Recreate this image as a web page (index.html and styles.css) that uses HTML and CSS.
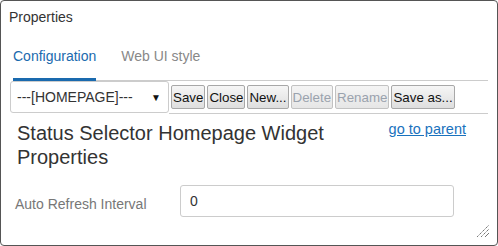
FILE: index.html
```html
<!DOCTYPE html>
<html lang="en">
<head>
    <meta charset="UTF-8">
    <title>Properties</title>
    <link rel="stylesheet" href="styles.css">
</head>
<body>
    <div class="window">
        <div class="title">Properties</div>

        <div class="tabs">
            <div class="tab active">Configuration</div>
            <div class="tab">Web UI style</div>
        </div>

        <div class="toolbar">
            <div class="picker">
                <span>---[HOMEPAGE]---</span>
                <span class="arrow">&#9660;</span>
            </div>
            <div class="buttons">
                <button>Save</button>
                <button>Close</button>
                <button>New...</button>
                <button disabled>Delete</button>
                <button disabled>Rename</button>
                <button>Save as...</button>
            </div>
        </div>

        <div class="head">
            <h1>Status Selector Homepage Widget Properties</h1>
            <a href="#" class="parent">go to parent</a>
        </div>

        <div class="field">
            <label for="refresh">Auto Refresh Interval</label>
            <input type="text" id="refresh" value="0">
        </div>

        <svg class="grip" width="14" height="14" viewBox="0 0 14 14">
            <line x1="1" y1="13" x2="13" y2="1" stroke="#777" stroke-width="1" stroke-dasharray="1.5 0.6"/>
            <line x1="5" y1="13" x2="13" y2="5" stroke="#777" stroke-width="1" stroke-dasharray="1.5 0.6"/>
            <line x1="9" y1="13" x2="13" y2="9" stroke="#777" stroke-width="1"/>
        </svg>
    </div>
</body>
</html>
```

FILE: styles.css
```css
body {
    margin: 0;
    font-family: "Liberation Sans", Arial, sans-serif;
    background: #fff;
}
.window {
    position: relative;
    box-sizing: border-box;
    width: 498px;
    height: 246px;
    border: 1px solid #555;
    border-radius: 4px;
    background: #fff;
}
.title {
    margin: 8px 0 0 8px;
    font-size: 14px;
    line-height: 16px;
    color: #333;
}
.tabs {
    display: flex;
    gap: 25px;
    margin: 23px 9px 0 12px;
    border-bottom: 1px solid #ccc;
}
.tab {
    font-size: 14px;
    line-height: 16px;
    padding-bottom: 14px;
    border-bottom: 3px solid transparent;
    margin-bottom: -1px;
    color: #888;
}
.tab.active {
    color: #1a6aae;
    border-bottom-color: #1a6aae;
}
.toolbar {
    display: flex;
    align-items: flex-start;
    margin: 0 9px 0 9px;
}
.picker {
    box-sizing: border-box;
    width: 159px;
    height: 32px;
    display: flex;
    align-items: center;
    justify-content: space-between;
    padding: 0 7px 0 6px;
    border: 1px solid #ccc;
    border-radius: 3px;
    font-size: 14px;
    color: #333;
}
.arrow {
    font-size: 10px;
    color: #111;
}
.buttons {
    flex: 1;
    box-sizing: border-box;
    height: 33px;
    display: flex;
    gap: 2px;
    align-items: flex-start;
    padding: 4px 0 0 2px;
    border-bottom: 1px solid #ccc;
}
button {
    font-family: "Liberation Sans", Arial, sans-serif;
    font-size: 13.33px;
    height: 24px;
    padding: 0 1px;
    border: 1px solid #a8a8a8;
    border-radius: 2px;
    background: linear-gradient(#f6f6f6, #dedede);
    color: #111;
}
button:disabled {
    color: #9aa2ad;
    border-color: #c2c2c2;
    background: linear-gradient(#f4f4f4, #e6e6e6);
}
.head {
    display: flex;
    align-items: flex-start;
    margin-top: 7px;
    padding: 0 31px 0 16px;
}
h1 {
    flex: 1;
    margin: 0;
    font-size: 20px;
    line-height: 24px;
    font-weight: normal;
    color: #333;
}
.parent {
    font-size: 14.5px;
    line-height: 17px;
    color: #1a72bd;
}
.field {
    display: flex;
    align-items: flex-start;
    margin-top: 16px;
    padding-left: 14px;
}
label {
    width: 165px;
    margin-top: 11px;
    font-size: 14px;
    line-height: 16px;
    color: #777;
}
input {
    box-sizing: border-box;
    width: 274px;
    height: 32px;
    padding: 0 9px;
    border: 1px solid #ccc;
    border-radius: 3px;
    font-family: "Liberation Sans", Arial, sans-serif;
    font-size: 14px;
    color: #333;
}
.grip {
    position: absolute;
    right: 7px;
    bottom: 7px;
}
```
